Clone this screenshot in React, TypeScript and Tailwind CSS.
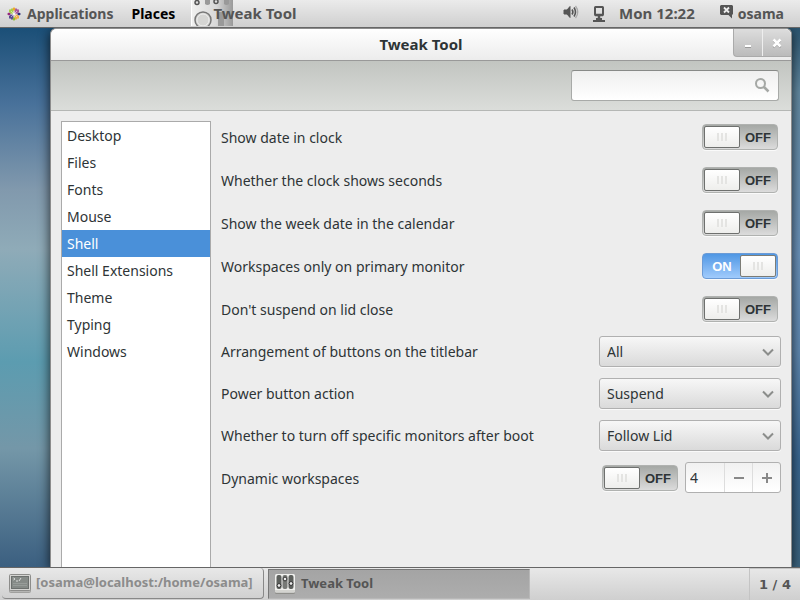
import React from "react";

const places = ["Desktop", "Files", "Fonts", "Mouse", "Shell", "Shell Extensions", "Theme", "Typing", "Windows"];

function Switch({ id, on = false }: { id: string; on?: boolean }) {
  return (
    <span className={`relative flex h-[26px] w-[76px] shrink-0 items-center rounded border p-px text-[13px] font-bold shadow-[0_1px_0_#fafafa] ${on ? "justify-end border-[#6b9bd6] bg-linear-to-b from-[#4f97e4] to-[#a0cbfc] text-white" : "border-[#b0b2b0] bg-linear-to-b from-[#a5a8a5] to-[#dcdcdc] text-[#2e3436]"}`}>
      <input id={id} type="checkbox" role="switch" defaultChecked={on} className="absolute inset-0 m-0 size-full appearance-none rounded" />
      {on && <span className="pointer-events-none flex-1 pt-0.5 text-center font-['Liberation_Sans',sans-serif]">ON</span>}
      <span className={`pointer-events-none flex h-[22px] w-9 items-center justify-center gap-0.5 rounded-xs border bg-linear-to-b from-white to-[#eeeeec] ${on ? "border-[#7c7c76]" : "border-[#6e706e]"}`}>
        <i className="h-2 w-0.5 bg-[#e4e4e2]" />
        <i className="h-2 w-0.5 bg-[#e4e4e2]" />
        <i className="h-2 w-0.5 bg-[#e4e4e2]" />
      </span>
      {!on && <span className="pointer-events-none flex-1 pt-0.5 text-center font-['Liberation_Sans',sans-serif]">OFF</span>}
    </span>
  );
}

function SwitchRow({ id, label, on }: { id: string; label: string; on?: boolean }) {
  return (
    <div className="flex h-[43px] items-start justify-between pr-[3px]">
      <label htmlFor={id} className="leading-7">{label}</label>
      <Switch id={id} on={on} />
    </div>
  );
}

function SelectRow({ id, label, value }: { id: string; label: string; value: string }) {
  return (
    <div className="flex h-[42px] items-start justify-between">
      <label htmlFor={id} className="leading-8">{label}</label>
      <span className="relative">
        <select id={id} defaultValue={value} className="h-[31px] w-[182px] appearance-none rounded-[3px] border border-[#b0b0b0] bg-linear-to-b from-[#f7f7f7] to-[#dadada] px-[7px] shadow-[0_1px_0_#fafafa]">
          <option>{value}</option>
        </select>
        <svg className="pointer-events-none absolute top-3 right-[7px] h-2 w-3" viewBox="0 0 12 8" fill="none" stroke="#8b8d8b" strokeWidth="2"><path d="M1 1.500 6 6.500 11 1.500" /></svg>
      </span>
    </div>
  );
}

function DistroIcon() {
  return (
    <svg className="size-3.5" viewBox="0 0 14 14">
      <path fill="#a9569a" d="M7.500 2.500 9 1l1.500 1.500H12V5l-2 2H7.500z" />
      <path fill="#a7cf4a" d="M6.500 2.500 5 1 3.500 2.500H2V5l2 2h2.500z" />
      <path fill="#5a4a94" d="M6.500 11.500 5 13l-1.500-1.500H2V9l2-1.500h2.500z" />
      <path fill="#efb04a" d="M7.500 11.500 9 13l1.500-1.500H12V9l-2-1.500H7.500z" />
      <path fill="#efa724" d="m7 0 1.500 2L7 4 5.500 2z" />
      <path fill="#932279" d="m0 7 2-1.500L4 7 2 8.500z" />
      <path fill="#262577" d="m14 7-2-1.500L10 7l2 1.500z" />
      <path fill="#8bbd2a" d="m7 14 1.500-2L7 10l-1.500 2z" />
      <path d="M7 4v6M4 7h6M4 4l6 6M10 4l-6 6" stroke="#eee" strokeWidth=".6" />
      <circle cx="7" cy="7" r="1.300" fill="#f4f4f4" />
    </svg>
  );
}

function TerminalIcon() {
  return (
    <svg className="h-[19px] w-[22px] shrink-0" viewBox="0 0 22 19">
      <rect x=".5" y="1.500" width="21" height="17" rx="1" fill="#b5b5b3" stroke="#a0a09e" />
      <rect x=".5" y=".5" width="21" height="16" rx="1" fill="#d4d4d2" stroke="#8c8c8a" />
      <rect x="2.500" y="2.500" width="17" height="12" fill="#858a87" stroke="#6c706e" />
      <path d="m4.500 4 1.500 1-1.500 1M7 7h2M10 7l2-3" fill="none" stroke="#e5e5e5" strokeWidth=".9" />
      <path d="M4 9.500h14M4 11.500h14" stroke="#979c99" />
    </svg>
  );
}

function TweakIcon() {
  return (
    <svg className="size-5 shrink-0" viewBox="0 0 20 20">
      <rect x="0" y="2" width="20" height="18" rx="1.500" fill="#8f8f8b" />
      <rect x="0" y="0" width="20" height="18.500" rx="1.500" fill="#f0f0ee" />
      <path d="M0 16h20v1.500q0 1-1 1H1q-1 0-1-1z" fill="#d4d4d0" />
      {[1.5, 7.5, 13.5].map((x, i) => (
        <g key={x}>
          <rect x={x} y="1" width="5" height="14" rx="2" fill={i === 1 ? "#777976" : "#5c5f5c"} />
          <circle cx={x + 2.5} cy={[11.5, 5, 9.5][i]} r="1.900" fill="#eee" stroke="#2e2e2e" />
        </g>
      ))}
    </svg>
  );
}

export default function App() {
  return (
    <div className="flex h-screen min-h-0 flex-col overflow-hidden font-['Noto_Sans',sans-serif] text-[14px] text-[#2e3436]">
      <header className="flex h-7 shrink-0 items-center border-b border-[#666] bg-linear-to-b from-[#ebebeb] to-[#cfcfcf] font-bold text-[#555]">
        <nav className="flex h-full items-center">
          <button className="flex items-center gap-1.5 pl-[7px]"><DistroIcon />Applications</button>
          <button className="ml-[18px] text-black">Places</button>
          <button className="relative ml-4 flex h-full items-center pl-[22px] text-[15px]">
            <svg className="absolute top-0 left-0 h-[26px] w-[42px]" viewBox="0 0 42 26">
              <defs><linearGradient id="fade"><stop stopColor="#f1f1f0" /><stop offset=".6" stopColor="#d8d8d8" /><stop offset="1" stopColor="#999" /></linearGradient></defs>
              <path fill="url(#fade)" d="M0 0h42v26H0z" />
              <path fill="#999" d="M27 12h6v14h-6zM14 0h5v4q-2.500 2-5 0zM33 0h5v4q-2.500 2-5 0z" />
              <path d="M.5 0v26" stroke="#fff" />
              <circle cx="6" cy="2.500" r="2" fill="#ddd" stroke="#555" strokeWidth="1.500" />
              <circle cx="25" cy="1.500" r="2" fill="#ddd" stroke="#555" strokeWidth="1.500" />
              <circle cx="12" cy="20" r="8" fill="#d5d5d3" stroke="#777" strokeWidth="1.500" />
              <circle cx="12" cy="20" r="6" fill="none" stroke="#eee" />
            </svg>
            <span className="relative">Tweak Tool</span>
          </button>
        </nav>
        <div className="ml-auto flex items-center pr-4">
          <svg className="mb-1 h-4 w-4" viewBox="0 0 16 16" fill="none" stroke="#555"><path fill="#555" d="M1 6h3l3-3.500v11L4 10H1z" /><path d="M9 5.500q1.800 2.500 0 5" strokeWidth="1.600" /><path d="M11 3.500q3 4.500 0 9" strokeWidth="1.600" /><path d="M12.500 2q4.500 6 0 12" stroke="#aaa" strokeWidth="1.300" /></svg>
          <svg className="ml-3.5 h-4 w-3" viewBox="0 0 12 16" fill="none" stroke="#555"><rect x="2" y="1" width="8" height="8" rx=".5" strokeWidth="2" /><path d="M2 9h8M6 10v3" strokeWidth="2.500" /><path d="M3 13h6M0 15h12" strokeWidth="2" /></svg>
          <button className="ml-3.5 text-[15px]">Mon 12:22</button>
          <button className="ml-6 flex items-center gap-1"><svg className="mb-1 size-[15px]" viewBox="0 0 15 15"><path fill="#555" d="M2 1h11l1 1v8l-1 1v3.500L9.500 11H2l-1-1V2z" /><path d="m5 3.500 5 5m0-5-5 5" stroke="#eee" strokeWidth="1.800" /></svg>osama</button>
        </div>
      </header>

      <main className="flex min-h-0 flex-1 overflow-hidden bg-[linear-gradient(#1b4f77,#48719a_14%,#8199ad_30%,#8fabb8_41%,#5c9cb0_62%,#7497a8_78%,#3b5f80),linear-gradient(#2b5570,#648ba3_12%,#6b93bb_42%,#6089b1_60%,#3a6791_80%,#3b637e)] bg-[size:50%_100%] bg-[position:left,right] bg-no-repeat pr-2 pl-[50px]">
        <section className="flex min-w-0 flex-1 flex-col rounded-t-md border border-b-0 border-[#8c8c8c] bg-[#ededed] shadow-[0_3px_12px_0_rgba(0,0,0,0.75)]">
          <div className="flex h-8 shrink-0 rounded-t-md border-b border-[#999] bg-linear-to-b from-white to-[#ececec]">
            <h1 className="flex-1 pl-[58px] text-center text-[15px] leading-[30px] font-bold">Tweak Tool</h1>
            <div className="flex h-7 w-[58px] overflow-hidden rounded-tr-md rounded-bl border-b border-l border-[#aaa] bg-linear-to-b from-[#ddd] to-[#bbb]">
              <button aria-label="Minimize" className="flex-1 border-r border-[#eee]"><svg className="mx-auto size-3" viewBox="0 0 12 12"><path d="M3 10.500h6" stroke="#999" /><path d="M3 9h6" stroke="#fff" strokeWidth="2" /></svg></button>
              <button aria-label="Close" className="flex-1"><svg className="mx-auto size-3" viewBox="0 0 12 12"><path d="m2.500 3.500 7 7m0-7-7 7" stroke="#999" strokeWidth="2" /><path d="m2.500 2.500 7 7m0-7-7 7" stroke="#fff" strokeWidth="2.500" /></svg></button>
            </div>
          </div>
          <div className="flex h-[50px] shrink-0 items-center justify-end border-b border-[#b5b7b5] bg-linear-to-b from-[#c2c5c1] to-[#dbddda] pr-3">
            <div className="relative">
              <input type="search" aria-label="Search" className="block h-[31px] w-[208px] rounded-[3px] border border-[#a8aaa8] border-t-[#888a88] bg-linear-to-b from-[#efefef] to-white px-2" />
              <svg className="absolute top-[7px] right-[9px] size-4" viewBox="0 0 16 16" fill="none" stroke="#a5a8a5" strokeWidth="2"><circle cx="6.500" cy="6.500" r="4.500" /><path d="m10 10 4.500 4.500" strokeWidth="2.500" /></svg>
            </div>
          </div>
          <div className="flex min-h-0 flex-1 gap-2.5 px-2.5 pt-2.5">
            <ul className="w-[150px] shrink-0 border border-b-0 border-[#aaa] bg-white">
              {places.map((p) => (
                <li key={p}><button className={`block h-[27px] w-full px-[5px] text-left ${p === "Shell" ? "bg-[#4a90d9] text-white" : ""}`}>{p}</button></li>
              ))}
            </ul>
            <form className="min-w-0 flex-1 pt-[3px]">
              <SwitchRow id="date" label="Show date in clock" />
              <SwitchRow id="seconds" label="Whether the clock shows seconds" />
              <SwitchRow id="week" label="Show the week date in the calendar" />
              <SwitchRow id="primary" label="Workspaces only on primary monitor" on />
              <SwitchRow id="lid" label="Don't suspend on lid close" />
              <div className="-mt-[3px]">
                <SelectRow id="titlebar" label="Arrangement of buttons on the titlebar" value="All" />
                <SelectRow id="power" label="Power button action" value="Suspend" />
                <SelectRow id="monitors" label="Whether to turn off specific monitors after boot" value="Follow Lid" />
              </div>
              <div className="flex h-[31px] items-center">
                <label htmlFor="dynamic" className="flex-1 pt-0.5">Dynamic workspaces</label>
                <Switch id="dynamic" />
                <div className="ml-[7px] flex h-[31px] w-24 rounded-[3px] border border-[#b0b0b0] bg-linear-to-b from-[#f1f1f1] to-white">
                  <input aria-label="Number of workspaces" defaultValue="4" className="w-[38px] px-1" />
                  <button type="button" aria-label="Decrease" className="flex-1 border-l border-[#ddd]"><svg className="mx-auto size-3" viewBox="0 0 12 12"><path d="M1 6h10" stroke="#888" strokeWidth="2" /></svg></button>
                  <button type="button" aria-label="Increase" className="flex-1 border-l border-[#ddd]"><svg className="mx-auto size-3" viewBox="0 0 12 12"><path d="M1 6h10M6 1v10" stroke="#888" strokeWidth="2" /></svg></button>
                </div>
              </div>
            </form>
          </div>
        </section>
      </main>

      <footer className="flex h-[33px] shrink-0 border-t border-[#666] bg-linear-to-b from-[#e8e8e8] to-[#cfcfcf] text-[13px] font-bold text-[#555]">
        <button className="mb-px ml-0.5 flex w-[262px] items-center gap-[5px] rounded-sm border-r border-b border-[#888] pl-[7px] whitespace-nowrap text-[#8c8c8c]"><TerminalIcon />[osama@localhost:/home/osama]</button>
        <button className="mt-px mb-px ml-1 flex w-[262px] items-center gap-1.5 border border-[#b8b8b8] border-t-[#777] border-l-[#777] bg-linear-to-b from-[#a4a4a4] to-[#adadad] pl-1.5"><TweakIcon />Tweak Tool</button>
        <button className="ml-auto w-[51px] border-t border-l border-[#c4c4c4] font-['DejaVu_Sans',sans-serif]">1 / 4</button>
      </footer>
    </div>
  );
}
